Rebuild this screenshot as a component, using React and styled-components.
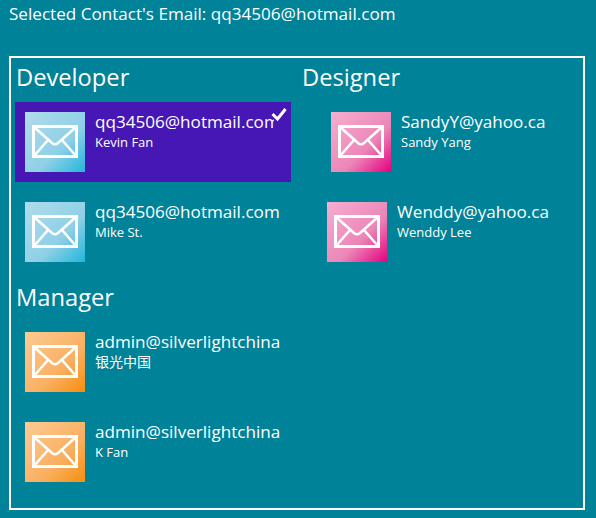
import styled, { createGlobalStyle } from "styled-components";

const GlobalStyle = createGlobalStyle`
  html, body {
    margin: 0;
    padding: 0;
    background-color: #008299;
  }
  body {
    font-family: "Open Sans", "Noto Sans CJK SC", sans-serif;
    color: white;
  }
`;

const Page = styled.div`
  width: 596px;
  height: 518px;
  overflow: hidden;
  padding: 0 0 0 9px;
  box-sizing: border-box;
`;

const Selected = styled.div`
  height: 56px;
  padding-top: 2px;
  box-sizing: border-box;
  font-size: 17.1px;
  line-height: 24px;
  white-space: nowrap;
`;

const Panel = styled.div`
  width: 576px;
  height: 454px;
  box-sizing: border-box;
  border: 2px solid white;
  padding: 4px 0 0 4px;
  display: grid;
  grid-template-columns: 286px 1fr;
`;

const Column = styled.div`
  display: flex;
  flex-direction: column;
`;

const GroupTitle = styled.div`
  height: 40px;
  padding-left: 1px;
  font-size: 23.7px;
  line-height: 30px;
`;

const Item = styled.div`
  position: relative;
  width: 276px;
  height: 80px;
  margin: 0 0 10px ${(props) => props.indent || 0}px;
  padding: 10px;
  box-sizing: border-box;
  display: flex;
  gap: 10px;
  background-color: ${(props) => (props.selected ? "#4617b4" : "transparent")};
`;

const Thumb = styled.div`
  width: 60px;
  height: 60px;
  flex-shrink: 0;
  background: linear-gradient(135deg, ${(props) => props.from}, ${(props) => props.mid} 60%, ${(props) => props.to});
`;

const Info = styled.div`
  width: 190px;
  white-space: nowrap;
`;

const Email = styled.div`
  font-size: 17.1px;
  line-height: 20px;
`;

const Name = styled.div`
  font-size: ${(props) => props.size || 13}px;
  line-height: 20px;
`;

const Check = styled.div`
  position: absolute;
  top: 0;
  right: 0;
  width: 17px;
  height: 26px;
  background-color: #4617b4;
`;

const CheckMark = styled.svg`
  display: block;
  overflow: visible;
`;

const blue = { from: "#b0dcec", mid: "#8fd0e6", to: "#22b6dc" };
const pink = { from: "#f6afcf", mid: "#ec86b8", to: "#e4007f" };
const orange = { from: "#fccb93", mid: "#fab063", to: "#f68f0d" };

function Envelope() {
  return (
    <svg width="60" height="60" viewBox="0 0 60 60" fill="none" stroke="white" strokeWidth="3">
      <rect x="8.5" y="14.5" width="43" height="30" />
      <path d="M9 15 L27 31 Q30 33.5 33 31 L51 15" strokeWidth="2.6" />
      <path d="M9 44 L23 28 M51 44 L37 28" strokeWidth="2.6" />
    </svg>
  );
}

function Contact({ color, email, name, nameSize, selected, indent }) {
  return (
    <Item selected={selected} indent={indent}>
      <Thumb {...color}>
        <Envelope />
      </Thumb>
      <Info>
        <Email>{email}</Email>
        <Name size={nameSize}>{name}</Name>
      </Info>
      {selected && (
        <Check>
          <CheckMark width="17" height="26" viewBox="0 0 17 26" fill="none" stroke="white" strokeWidth="3">
            <path d="M-1.5 12 L3.5 17 L11.5 7" />
          </CheckMark>
        </Check>
      )}
    </Item>
  );
}

export default function App() {
  return (
    <Page>
      <GlobalStyle />
      <Selected>Selected Contact's Email: qq34506@hotmail.com</Selected>
      <Panel>
        <Column>
          <GroupTitle>Developer</GroupTitle>
          <Contact color={blue} email="qq34506@hotmail.com" name="Kevin Fan" selected />
          <Contact color={blue} email="qq34506@hotmail.com" name="Mike St." />
          <GroupTitle>Manager</GroupTitle>
          <Contact color={orange} email="admin@silverlightchina" name="银光中国" nameSize={14} />
          <Contact color={orange} email="admin@silverlightchina" name="K Fan" />
        </Column>
        <Column>
          <GroupTitle>Designer</GroupTitle>
          <Contact color={pink} email="SandyY@yahoo.ca" name="Sandy Yang" indent={20} />
          <Contact color={pink} email="Wenddy@yahoo.ca" name="Wenddy Lee" indent={16} />
        </Column>
      </Panel>
    </Page>
  );
}
